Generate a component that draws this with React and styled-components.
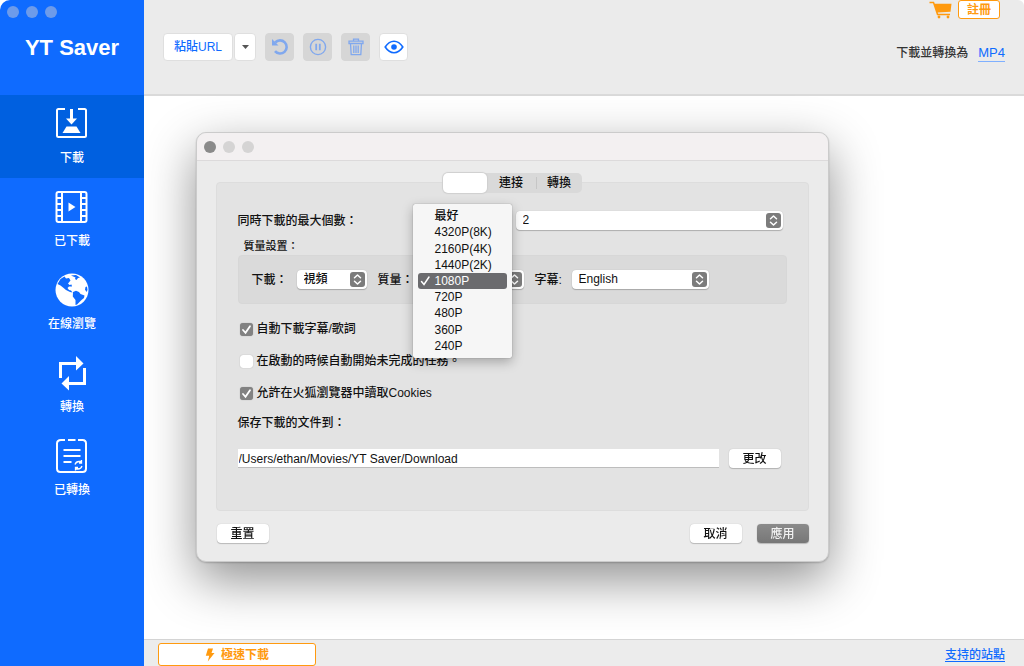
import React from "react";
import styled, { createGlobalStyle } from "styled-components";

const BLUE = "#0f6bff";
const ORANGE = "#ff9a0f";

const GlobalStyle = createGlobalStyle`
  *, *::before, *::after { box-sizing: border-box; }
  body {
    margin: 0;
    background: #fff;
    color: #111;
    font: 500 12px/16px "Liberation Sans", "Noto Sans CJK TC", sans-serif;
  }
  button, input, select { font: inherit; color: inherit; margin: 0; }
  ul { list-style: none; margin: 0; padding: 0; }
`;

const App = styled.div`
  display: flex;
  min-height: 100vh;
  overflow: hidden;
  border-radius: 10px 6px 0 0;
`;

/* ---------- Sidebar ---------- */

const Sidebar = styled.aside`
  flex: 0 0 144px;
  background: ${BLUE};
  color: #fff;
`;

const SidebarHead = styled.header`
  height: 95px;
  padding-top: 6px;
`;

const Lights = styled.div`
  display: flex;
  gap: 7px;
  padding-left: ${(p) => p.$inset}px;
`;

const Light = styled.span`
  width: 12px;
  height: 12px;
  border-radius: 50%;
  background: ${(p) => p.$color};
`;

const Brand = styled.h1`
  margin: 16px 0 0;
  font-size: 22px;
  line-height: 28px;
  font-weight: 700;
  text-align: center;
`;

const NavItem = styled.button`
  display: flex;
  flex-direction: column;
  align-items: center;
  gap: 8px;
  width: 100%;
  height: 83px;
  padding: 11px 0 0;
  border: 0;
  background: ${(p) => (p.$active ? "#0060e0" : "transparent")};
`;

/* ---------- Main column ---------- */

const Main = styled.main`
  flex: 1;
  min-width: 0;
  display: flex;
  flex-direction: column;
  background: #fff;
`;

const TopBar = styled.header`
  display: flex;
  justify-content: space-between;
  height: 96px;
  padding: 0 19px;
  background: #ebebeb;
  border-bottom: 2px solid #dadada;
`;

const Tools = styled.div`
  display: flex;
  align-items: center;
  gap: 9px;
`;

const SplitButton = styled.div`
  display: flex;
  gap: 1px;
`;

const ToolButton = styled.button`
  display: flex;
  align-items: center;
  justify-content: center;
  width: ${(p) => p.$width || 29}px;
  height: 28px;
  padding: 0;
  border: 1px solid ${(p) => (p.disabled ? "#d6d6d6" : "#dfdfdf")};
  border-radius: 4px;
  background: ${(p) => (p.disabled ? "#d6d6d6" : "#fff")};
  color: ${(p) => (p.disabled ? "#80a8ee" : BLUE)};
`;

const Account = styled.div`
  display: flex;
  flex-direction: column;
  align-items: flex-end;
  gap: 26px;
`;

const AccountRow = styled.div`
  display: flex;
  gap: 6px;
  padding-right: 5px;
`;

const CartButton = styled.button`
  padding: 0;
  border: 0;
  height: 19px;
  background: none;
  color: ${ORANGE};
`;

const OutlineButton = styled.button`
  display: flex;
  align-items: center;
  justify-content: center;
  gap: 6px;
  width: ${(p) => p.$width}px;
  height: ${(p) => p.$height}px;
  padding: 0;
  border: 1px solid ${ORANGE};
  border-radius: 3px;
  background: #fff;
  color: ${ORANGE};
  font-weight: 700;
`;

const FormatRow = styled.p`
  display: flex;
  gap: 10px;
  margin: 0;
  color: #333;
`;

const FormatLink = styled.a`
  color: ${BLUE};
  font-size: 13px;
  text-decoration: none;
  border-bottom: 1px solid #7fb0ff;
`;

const Content = styled.section`
  flex: 1;
`;

const BottomBar = styled.footer`
  display: flex;
  justify-content: space-between;
  height: 27px;
  padding: 3px 19px 0 14px;
  background: #ececec;
  border-top: 1px solid #d4d4d4;
`;

const SitesLink = styled.a`
  padding-top: 4px;
  color: ${BLUE};
  text-underline-offset: 2px;
`;

/* ---------- Preferences dialog ---------- */

const Overlay = styled.div`
  position: fixed;
  inset: 0;
  display: flex;
  justify-content: center;
  align-items: flex-start;
  padding: 132px 32px 0;
`;

const Dialog = styled.section`
  width: 100%;
  max-width: 633px;
  border: 1px solid #cbcbcb;
  border-radius: 10px;
  background: #ebebeb;
  box-shadow: 0 18px 50px rgba(0, 0, 0, 0.44), 0 1px 2px rgba(0, 0, 0, 0.2);
`;

const TitleBar = styled.header`
  display: flex;
  align-items: center;
  height: 28px;
  border-bottom: 1px solid #dcdadb;
  border-radius: 10px 10px 0 0;
  background: #f3f0f1;
`;

const DialogBody = styled.div`
  padding: 12px 19px 18px;
`;

const Tabs = styled.div`
  position: relative;
  display: flex;
  width: max-content;
  margin: 0 auto -11px;
  border-radius: 5px;
  background: #d9d9d9;
`;

const Tab = styled.button`
  width: ${(p) => p.$width}px;
  height: 20px;
  padding: 0;
  border: 0;
  border-radius: 5px;
  background: ${(p) => (p.$active ? "#fff" : "transparent")};
  box-shadow: ${(p) => (p.$active ? "0 0 1px 1px #cfcfcf" : "none")};
`;

const TabDivider = styled.span`
  width: 1px;
  height: 12px;
  margin: 4px 0;
  background: #c6c6c6;
`;

const Panel = styled.div`
  height: 329px;
  padding: 28px 21px 0;
  border: 1px solid #dddddd;
  border-radius: 4px;
  background: #e3e3e3;
`;

const Row = styled.div`
  display: flex;
  align-items: center;
`;

const CountRow = styled(Row)`
  padding-right: 4px;
`;

const Label = styled.label`
  flex: 0 0 ${(p) => p.$width}px;
  white-space: nowrap;
`;

const SelectBox = styled.span`
  position: relative;
  display: flex;
  flex: ${(p) => (p.$width ? `0 0 ${p.$width}px` : "1")};
  height: 19px;
`;

const NativeSelect = styled.select`
  appearance: none;
  width: 100%;
  height: 19px;
  padding: 0 24px 0 7px;
  border: 0;
  border-radius: 4px;
  background: #fff;
  box-shadow: 0 1px 1px rgba(0, 0, 0, 0.22), 0 0 1px rgba(0, 0, 0, 0.2);
  line-height: 19px;
`;

const Stepper = styled.svg`
  position: absolute;
  top: 2px;
  right: 2px;
  pointer-events: none;
`;

const GroupTitle = styled.h2`
  margin: 8px 0 1px 6px;
  font-size: 11px;
  font-weight: 500;
  line-height: 16px;
`;

const Group = styled(Row)`
  gap: 11px;
  height: 49px;
  padding: 0 13px;
  border: 1px solid #d7d7d7;
  border-radius: 4px;
  background: #dadada;
`;

const Field = styled(Row)`
  position: relative;
`;

const Menu = styled.ul`
  && { padding: 4px 5px; }
  position: absolute;
  top: -66px;
  left: 35px;
  z-index: 2;
  display: flex;
  flex-direction: column;
  width: 99px;
  height: 154px;
  border-radius: 2px;
  background: #f6f6f6;
  box-shadow: 0 4px 12px rgba(0, 0, 0, 0.28), 0 0 1px rgba(0, 0, 0, 0.5);
`;

const MenuItem = styled.li`
  display: grid;
  grid-template-columns: 17px 1fr;
  flex: 1;
  align-items: center;
  border-radius: 3px;
  background: ${(p) => (p.$selected ? "#6b6b6e" : "transparent")};
  color: ${(p) => (p.$selected ? "#fff" : "#111")};
  line-height: 16px;
`;

const MenuText = styled.span`
  grid-column: 2;
`;

const CheckList = styled.div`
  display: flex;
  flex-direction: column;
  gap: 16px;
  margin: 17px 0 14px 2px;
`;

const CheckLabel = styled.label`
  display: flex;
  align-items: center;
  gap: 4px;
`;

const CheckWrap = styled.span`
  position: relative;
  display: flex;
`;

const CheckInput = styled.input`
  appearance: none;
  width: 13px;
  height: 13px;
  border-radius: 3px;
  background: #fff;
  box-shadow: 0 0 1px rgba(0, 0, 0, 0.35);
  &:checked { background: #828282; }
`;

const Tick = styled.svg`
  position: absolute;
  top: 0;
  left: 0;
  pointer-events: none;
`;

const PathRow = styled(Row)`
  gap: 10px;
  margin-top: 18px;
  padding-right: 6px;
`;

const PathInput = styled.input`
  flex: 1;
  min-width: 0;
  height: 19px;
  padding: 1px 1px 0;
  border: 0;
  border-bottom: 1px solid #bdbdbd;
  background: #fff;
`;

const PushButton = styled.button`
  width: 52px;
  height: 19px;
  padding: 0;
  border: 0;
  border-radius: 4px;
  background: ${(p) => (p.$primary ? "linear-gradient(#8b8b8b, #777)" : "#fff")};
  color: ${(p) => (p.$primary ? "#f2f2f2" : "#111")};
  box-shadow: 0 1px 1px rgba(0, 0, 0, 0.2), 0 0 1px rgba(0, 0, 0, 0.25);
  line-height: 18px;
`;

const Actions = styled.div`
  display: flex;
  gap: 15px;
  margin-top: 13px;
  padding-left: 1px;
`;

const ResetButton = styled(PushButton)`
  margin-right: auto;
`;

/* ---------- Icons ---------- */

const DownloadIcon = () => (
  <svg width="36" height="36" viewBox="0 0 36 36" fill="none" stroke="#fff" strokeWidth="2">
    <path d="M11 3H4.500Q3 3 3 4.500V29.500Q3 31 4.500 31H30.500Q32 31 32 29.500V4.500Q32 3 30.500 3H24" />
    <path d="M17.500 3V14" strokeWidth="3" />
    <path d="M12 12.500L17.500 18.500L23 12.500Z" fill="#fff" stroke="none" />
    <path d="M12.500 20.500H22.500L26.500 27H8.500Z" fill="#fff" stroke="none" />
  </svg>
);

const FilmIcon = () => (
  <svg width="36" height="36" viewBox="0 0 36 36" fill="none" stroke="#fff" strokeWidth="2">
    <rect x="2.500" y="3" width="30" height="30" rx="2" />
    <path d="M8 3V33M27 3V33M3 9H8M3 15H8M3 21H8M3 27H8M27 9H32M27 15H32M27 21H32M27 27H32" />
    <path d="M14.500 13.500L21.500 18L14.500 22.500Z" fill="#fff" stroke="none" />
  </svg>
);

const GlobeIcon = () => (
  <svg width="36" height="36" viewBox="0 0 36 36" fill={BLUE}>
    <circle cx="18" cy="18" r="16.500" fill="#fff" />
    <path d="M3.500 12L6.500 7L10.500 4.500L12 6.500L15 6L16.500 8.500L14 11.500L15.500 13L17.500 12.500L18 14.500L15 14.500L13.500 16L15 18L17 18.500L18.500 20.500L16 20L12 18L9 15.500L6.500 13.500Z" />
    <path d="M19 20L22 18.800L25 20L26.500 22L30.500 23.500L30 26L27.500 28L25.500 30L23 32.500L21.500 33L21.500 28L18.800 24.500Z" />
    <path d="M17 3.500L22 3L26 5.500L24 6L22.500 8L21 7L21.500 5.500Z" />
    <path d="M31.500 15L33 14.500L33.500 18L32.500 20L31 17.500Z" />
  </svg>
);

const ConvertIcon = () => (
  <svg width="36" height="36" viewBox="0 0 36 36" fill="none" stroke="#fff" strokeWidth="3">
    <path d="M6.500 23V8.500H23" />
    <path d="M30.500 13V28.500H14" />
    <path d="M22 1L29.500 8.500L22 15.500Z" fill="#fff" stroke="none" />
    <path d="M15 21L7.500 28.500L15 35.500Z" fill="#fff" stroke="none" />
  </svg>
);

const ConvertedIcon = () => (
  <svg width="36" height="36" viewBox="0 0 36 36" fill="none" stroke="#fff" strokeWidth="2">
    <path d="M11 2H7Q3 2 3 5.500V30.500Q3 34 6.500 34H28.500Q32 34 32 30.500V5.500Q32 2 28.500 2H24M14 2H21.500" />
    <path d="M9.500 12H26.500M9.500 18H26.500M9.500 24H17.500" />
    <path d="M21 26.500Q22 23.500 25 23.500H27M27.500 22V25H25M28 28Q27 31 24 31H22M21.500 32.500V29.500H24" strokeWidth="1.300" />
  </svg>
);

const CaretIcon = () => (
  <svg width="9" height="6" viewBox="0 0 9 6" fill="#555">
    <path d="M1 1H8L4.500 5Z" />
  </svg>
);

const ReloadIcon = () => (
  <svg width="18" height="18" viewBox="0 0 18 18" fill="none" stroke="currentColor" strokeWidth="2.600">
    <path d="M4.200 4.500A6.600 6.600 0 1 1 4 13.200" />
    <path d="M1 1V7.500H7.500Z" fill="currentColor" stroke="none" />
  </svg>
);

const PauseIcon = () => (
  <svg width="18" height="18" viewBox="0 0 18 18" fill="none" stroke="currentColor" strokeWidth="1.400">
    <circle cx="9" cy="9" r="7.600" />
    <path d="M7.200 5.800V12.200M10.800 5.800V12.200" strokeWidth="1.800" />
  </svg>
);

const TrashIcon = () => (
  <svg width="16" height="18" viewBox="0 0 16 18" fill="none" stroke="currentColor" strokeWidth="1.300">
    <path d="M1 3.200H15V5.500H1ZM5.500 3V1.200H10.500V3M2.500 5.500L3.200 16.700H12.800L13.500 5.500M5.800 7.500V15M8 7.500V15M10.200 7.500V15" />
  </svg>
);

const EyeIcon = () => (
  <svg width="20" height="14" viewBox="0 0 20 14" fill="none" stroke="currentColor" strokeWidth="1.600">
    <path d="M1.200 7Q5 1.200 10 1.200T18.800 7Q15 12.800 10 12.800T1.200 7Z" />
    <circle cx="10" cy="7" r="2.800" fill="currentColor" stroke="none" />
  </svg>
);

const CartIcon = () => (
  <svg width="23" height="19" viewBox="0 0 23 19" fill="currentColor">
    <path d="M0.500 1.800H5L5.800 3.800H22.500L21.500 11.800L8.700 12.500L9.200 13.800H21V15.200H8L4 3.300H0.500Z" />
    <circle cx="10" cy="17" r="1.400" />
    <circle cx="19" cy="17" r="1.400" />
  </svg>
);

const BoltIcon = () => (
  <svg width="10" height="14" viewBox="0 0 10 14" fill="currentColor">
    <path d="M3 0.500H8L6.500 5H9.500L2.800 13.500L4.200 7.700H0.800Z" />
  </svg>
);

const StepperIcon = () => (
  <Stepper width="15" height="15" viewBox="0 0 15 15" fill="none" stroke="#fff" strokeWidth="1.500" strokeLinecap="round" strokeLinejoin="round">
    <rect width="15" height="15" rx="3" fill="#7c7c7c" stroke="none" />
    <path d="M4.500 5.800L7.500 3L10.500 5.800M4.500 9.200L7.500 12L10.500 9.200" />
  </Stepper>
);

const CheckMark = () => (
  <svg width="13" height="12" viewBox="0 0 13 12" fill="none" stroke="#fff" strokeWidth="1.500" strokeLinecap="round">
    <path d="M3.500 6.500L6 9.500L11 2" />
  </svg>
);

/* ---------- Composite controls ---------- */

const Select = ({ id, width, value, options }) => (
  <SelectBox $width={width}>
    <NativeSelect id={id} defaultValue={value}>
      {options.map((o) => (
        <option key={o}>{o}</option>
      ))}
    </NativeSelect>
    <StepperIcon />
  </SelectBox>
);

const Checkbox = ({ checked, children }) => (
  <CheckLabel>
    <CheckWrap>
      <CheckInput type="checkbox" defaultChecked={checked} />
      {checked && (
        <Tick width="13" height="13" viewBox="0 0 13 13" fill="none" stroke="#fff" strokeWidth="1.800" strokeLinecap="round">
          <path d="M3 7L5.500 9.800L10 3.200" />
        </Tick>
      )}
    </CheckWrap>
    {children}
  </CheckLabel>
);

const NAV = [
  { label: "下載", Icon: DownloadIcon, active: true },
  { label: "已下載", Icon: FilmIcon },
  { label: "在線瀏覽", Icon: GlobeIcon },
  { label: "轉換", Icon: ConvertIcon },
  { label: "已轉換", Icon: ConvertedIcon },
];

const QUALITIES = ["最好", "4320P(8K)", "2160P(4K)", "1440P(2K)", "1080P", "720P", "480P", "360P", "240P"];

export default function YTSaver() {
  return (
    <>
      <GlobalStyle />
      <App>
        <Sidebar>
          <SidebarHead>
            <Lights $inset={7}>
              <Light $color="#6d9bea" />
              <Light $color="#6d9bea" />
              <Light $color="#6d9bea" />
            </Lights>
            <Brand>YT Saver</Brand>
          </SidebarHead>
          <nav>
            {NAV.map(({ label, Icon, active }) => (
              <NavItem key={label} $active={active}>
                <Icon />
                {label}
              </NavItem>
            ))}
          </nav>
        </Sidebar>
        <Main>
          <TopBar>
            <Tools>
              <SplitButton>
                <ToolButton $width={70}>粘貼URL</ToolButton>
                <ToolButton $width={22} aria-label="更多"><CaretIcon /></ToolButton>
              </SplitButton>
              <ToolButton disabled aria-label="重試"><ReloadIcon /></ToolButton>
              <ToolButton disabled aria-label="暫停"><PauseIcon /></ToolButton>
              <ToolButton disabled aria-label="刪除"><TrashIcon /></ToolButton>
              <ToolButton aria-label="查看"><EyeIcon /></ToolButton>
            </Tools>
            <Account>
              <AccountRow>
                <CartButton aria-label="購買"><CartIcon /></CartButton>
                <OutlineButton $width={42} $height={19}>註冊</OutlineButton>
              </AccountRow>
              <FormatRow>
                下載並轉換為
                <FormatLink href="#format">MP4</FormatLink>
              </FormatRow>
            </Account>
          </TopBar>
          <Content />
          <BottomBar>
            <OutlineButton $width={158} $height={23}>
              <BoltIcon />
              極速下載
            </OutlineButton>
            <SitesLink href="#sites">支持的站點</SitesLink>
          </BottomBar>
        </Main>
      </App>
      <Overlay>
        <Dialog role="dialog" aria-label="設置">
          <TitleBar>
            <Lights $inset={7}>
              <Light $color="#8a8a8a" />
              <Light $color="#d5d4d4" />
              <Light $color="#d5d4d4" />
            </Lights>
          </TitleBar>
          <DialogBody>
            <Tabs role="tablist">
              <Tab role="tab" $width={44} $active aria-selected="true" aria-label="常規" />
              <Tab role="tab" $width={49}>連接</Tab>
              <TabDivider />
              <Tab role="tab" $width={45}>轉換</Tab>
            </Tabs>
            <Panel>
              <CountRow>
                <Label htmlFor="max" $width={278}>同時下載的最大個數：</Label>
                <Select id="max" value="2" options={["1", "2", "3"]} />
              </CountRow>
              <GroupTitle>質量設置：</GroupTitle>
              <Group>
                <Field>
                  <Label htmlFor="kind" $width={45}>下載：</Label>
                  <Select id="kind" width={70} value="視頻" options={["視頻", "音頻"]} />
                </Field>
                <Field>
                  <Label htmlFor="quality" $width={39}>質量：</Label>
                  <Select id="quality" width={107} value="1080P" options={QUALITIES} />
                  <Menu role="listbox" aria-label="質量">
                    {QUALITIES.map((q) => (
                      <MenuItem key={q} role="option" $selected={q === "1080P"} aria-selected={q === "1080P"}>
                        {q === "1080P" && <CheckMark />}
                        <MenuText>{q}</MenuText>
                      </MenuItem>
                    ))}
                  </Menu>
                </Field>
                <Field>
                  <Label htmlFor="subs" $width={37}>字幕:</Label>
                  <Select id="subs" width={137} value="English" options={["English"]} />
                </Field>
              </Group>
              <CheckList>
                <Checkbox checked>自動下載字幕/歌詞</Checkbox>
                <Checkbox>在啟動的時候自動開始未完成的任務。</Checkbox>
                <Checkbox checked>允許在火狐瀏覽器中讀取Cookies</Checkbox>
              </CheckList>
              <Label htmlFor="path">保存下載的文件到：</Label>
              <PathRow>
                <PathInput id="path" defaultValue="/Users/ethan/Movies/YT Saver/Download" />
                <PushButton>更改</PushButton>
              </PathRow>
            </Panel>
            <Actions>
              <ResetButton>重置</ResetButton>
              <PushButton>取消</PushButton>
              <PushButton $primary>應用</PushButton>
            </Actions>
          </DialogBody>
        </Dialog>
      </Overlay>
    </>
  );
}
